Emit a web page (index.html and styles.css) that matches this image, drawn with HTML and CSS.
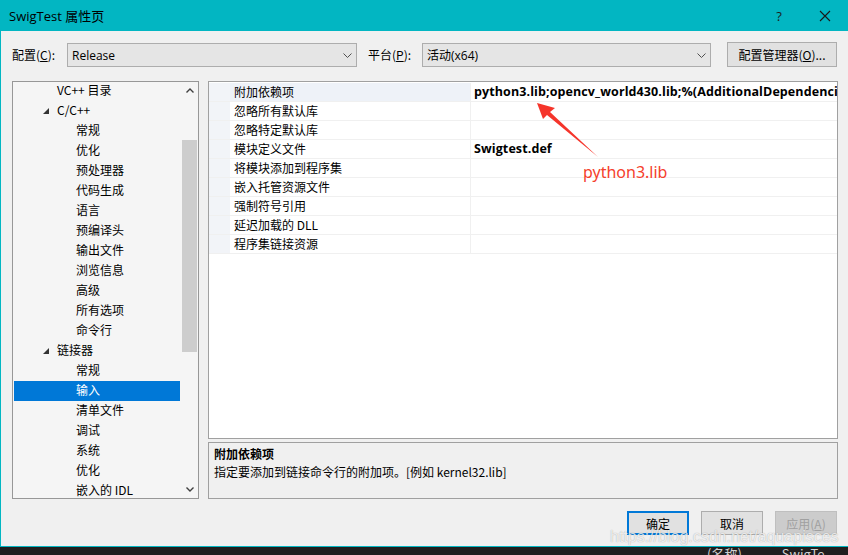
FILE: index.html
```html
<!DOCTYPE html>
<html>
<head>
<meta charset="utf-8">
<link rel="stylesheet" href="styles.css">
</head>
<body>
<div class="screen">
  <div class="titlebar">
    <span class="title">SwigTest 属性页</span>
    <span class="tb-btn tb-help">?</span>
    <span class="tb-btn"><svg width="12" height="12" viewBox="0 0 12 12"><path d="M1 1 L11 11 M11 1 L1 11" stroke="#1a1a1a" stroke-width="1.1" fill="none"/></svg></span>
  </div>
  <div class="dialog">
    <div class="toolbar">
      <span class="lbl">配置(<u>C</u>):</span>
      <div class="combo combo-config"><span>Release</span><svg class="chev" width="9" height="5" viewBox="0 0 9 5"><path d="M0.5 0.5 L4.5 4.5 L8.5 0.5" stroke="#505050" fill="none"/></svg></div>
      <span class="lbl lbl-plat">平台(<u>P</u>):</span>
      <div class="combo combo-plat"><span>活动(x64)</span><svg class="chev" width="9" height="5" viewBox="0 0 9 5"><path d="M0.5 0.5 L4.5 4.5 L8.5 0.5" stroke="#505050" fill="none"/></svg></div>
      <div class="btn btn-mgr">配置管理器(<u>O</u>)...</div>
    </div>
    <div class="main">
      <div class="tree">
        <div class="tree-list">
          <div class="row l1">VC++ 目录</div>
          <div class="row l1x"><svg class="tri" width="6" height="6" viewBox="0 0 6 6"><path d="M6 0 L6 6 L0 6 Z" fill="#333"/></svg>C/C++</div>
          <div class="row l2">常规</div>
          <div class="row l2">优化</div>
          <div class="row l2">预处理器</div>
          <div class="row l2">代码生成</div>
          <div class="row l2">语言</div>
          <div class="row l2">预编译头</div>
          <div class="row l2">输出文件</div>
          <div class="row l2">浏览信息</div>
          <div class="row l2">高级</div>
          <div class="row l2">所有选项</div>
          <div class="row l2">命令行</div>
          <div class="row l1x"><svg class="tri" width="6" height="6" viewBox="0 0 6 6"><path d="M6 0 L6 6 L0 6 Z" fill="#333"/></svg>链接器</div>
          <div class="row l2">常规</div>
          <div class="row l2 sel">输入</div>
          <div class="row l2">清单文件</div>
          <div class="row l2">调试</div>
          <div class="row l2">系统</div>
          <div class="row l2">优化</div>
          <div class="row l2">嵌入的 IDL</div>
        </div>
        <div class="scrollbar">
          <div class="sb-btn"><svg width="8" height="5" viewBox="0 0 8 5"><path d="M0.5 4.5 L4 1 L7.5 4.5" stroke="#404040" stroke-width="1.4" fill="none"/></svg></div>
          <div class="sb-track"><div class="sb-thumb"></div></div>
          <div class="sb-btn"><svg width="8" height="5" viewBox="0 0 8 5"><path d="M0.5 0.5 L4 4 L7.5 0.5" stroke="#404040" stroke-width="1.4" fill="none"/></svg></div>
        </div>
      </div>
      <div class="right">
        <div class="grid">
          <div class="prow first"><div class="gut"></div><div class="pname">附加依赖项</div><div class="pval">python3.lib;opencv_world430.lib;%(AdditionalDependencies)</div></div>
          <div class="prow"><div class="gut"></div><div class="pname">忽略所有默认库</div><div class="pval"></div></div>
          <div class="prow"><div class="gut"></div><div class="pname">忽略特定默认库</div><div class="pval"></div></div>
          <div class="prow"><div class="gut"></div><div class="pname">模块定义文件</div><div class="pval">Swigtest.def</div></div>
          <div class="prow"><div class="gut"></div><div class="pname">将模块添加到程序集</div><div class="pval"></div></div>
          <div class="prow"><div class="gut"></div><div class="pname">嵌入托管资源文件</div><div class="pval"></div></div>
          <div class="prow"><div class="gut"></div><div class="pname">强制符号引用</div><div class="pval"></div></div>
          <div class="prow"><div class="gut"></div><div class="pname">延迟加载的 DLL</div><div class="pval"></div></div>
          <div class="prow"><div class="gut"></div><div class="pname">程序集链接资源</div><div class="pval"></div></div>
        </div>
        <div class="desc">
          <div class="desc-title">附加依赖项</div>
          <div class="desc-text">指定要添加到链接命令行的附加项。[例如 kernel32.lib]</div>
        </div>
      </div>
    </div>
    <div class="footer">
      <div class="btn fbtn default">确定</div>
      <div class="btn fbtn">取消</div>
      <div class="btn fbtn disabled">应用(<u>A</u>)</div>
    </div>
  </div>
  <div class="taskbar">
    <span class="tk-a">(名称)</span>
    <span class="tk-b">SwigTe</span>
  </div>
  <svg class="annot" width="848" height="555" viewBox="0 0 848 555">
    <polygon points="537,103 555,108 550,112 598,157 547,115 543,119" fill="#f5352b"/>
  </svg>
  <div class="annot-text">python3.lib</div>
  <div class="watermark">https://blog.csdn.net/aquapisces</div>
</div>
</body>
</html>
```
FILE: styles.css
```css
html, body {
  margin: 0;
  padding: 0;
}
body {
  width: 848px;
  height: 555px;
  overflow: hidden;
  font-family: "Open Sans", "Noto Sans CJK SC", sans-serif;
  font-size: 12px;
  color: #000;
  background: #1e1e1e;
}
.screen {
  position: relative;
  width: 848px;
  height: 555px;
  overflow: hidden;
}
.titlebar {
  height: 31px;
  background: #02b6c2;
  display: flex;
  align-items: center;
}
.title {
  flex: 1;
  padding-left: 9px;
  font-size: 13px;
  color: #000;
}
.tb-btn {
  width: 46px;
  height: 31px;
  display: flex;
  align-items: center;
  justify-content: center;
  font-size: 13px;
  color: #1a1a1a;
}
.dialog {
  height: 516px;
  box-sizing: border-box;
  background: #f0f0f0;
  border-left: 1px solid #02b6c2;
  border-bottom: 1px solid #02b6c2;
  display: flex;
  flex-direction: column;
}
.toolbar {
  margin-top: 11px;
  height: 25px;
  display: flex;
  align-items: center;
  padding-left: 11px;
}
.lbl {
  width: 55px;
  font-family: "Noto Sans CJK SC", sans-serif;
}
.lbl-plat {
  margin-left: 11px;
  width: 54px;
}
.combo {
  height: 24px;
  box-sizing: border-box;
  border: 1px solid #adadad;
  background: #e5e5e5;
  display: flex;
  align-items: center;
  justify-content: space-between;
  padding: 0 4px 0 4px;
  margin-top: 1px;
}
.combo-config { width: 290px; }
.combo-plat { width: 289px; }
.btn {
  height: 24px;
  box-sizing: border-box;
  border: 1px solid #adadad;
  background: #e1e1e1;
  display: flex;
  align-items: center;
  justify-content: center;
  font-family: "Noto Sans CJK SC", sans-serif;
}
.btn-mgr {
  margin-left: 16px;
  width: 110px;
  height: 25px;
}
.main {
  margin-top: 14px;
  height: 418px;
  display: flex;
  padding-left: 11px;
}
.tree {
  width: 187px;
  height: 418px;
  box-sizing: border-box;
  border: 1px solid #979797;
  background: #f5f5f5;
  display: flex;
}
.tree-list {
  flex: 1;
  padding: 0 1px;
  margin-top: -1px;
  overflow: hidden;
  font-family: "Noto Sans CJK SC", sans-serif;
}
.row {
  height: 20px;
  box-sizing: border-box;
  padding-bottom: 2px;
  line-height: 18px;
  white-space: nowrap;
  display: flex;
  align-items: center;
}
.l1 { padding-left: 43px; }
.l1x { padding-left: 29px; }
.l2 { padding-left: 62px; }
.tri { margin-right: 8px; margin-top: 2px; }
.row.sel {
  background: #0078d7;
  color: #fff;
}
.scrollbar {
  width: 17px;
  display: flex;
  flex-direction: column;
}
.sb-btn {
  height: 17px;
  display: flex;
  align-items: center;
  justify-content: center;
}
.sb-track {
  flex: 1;
  padding: 41px 1px 0 1px;
}
.sb-thumb {
  height: 212px;
  background: #cdcdcd;
}
.right {
  margin-left: 9px;
  width: 630px;
  display: flex;
  flex-direction: column;
}
.grid {
  height: 358px;
  box-sizing: border-box;
  border: 1px solid #a0a0a0;
  background: #fff;
  padding-top: 1px;
  overflow: hidden;
}
.prow {
  height: 19px;
  box-sizing: border-box;
  border-bottom: 1px solid #f0f0f0;
  display: flex;
}
.gut {
  width: 21px;
  background: #f2f4f8;
}
.pname {
  width: 241px;
  box-sizing: border-box;
  padding-left: 4px;
  line-height: 18px;
  border-right: 1px solid #f0f0f0;
  font-family: "Noto Sans CJK SC", sans-serif;
  white-space: nowrap;
}
.prow.first .pname {
  background: #eef2f8;
}
.pval {
  flex: 1;
  padding-left: 3px;
  line-height: 18px;
  font-size: 12.5px;
  letter-spacing: 0.1px;
  font-weight: bold;
  white-space: nowrap;
  overflow: hidden;
}
.desc {
  margin-top: 3px;
  height: 57px;
  box-sizing: border-box;
  border: 1px solid #a0a0a0;
  background: #f0f0f0;
  padding: 2px 5px 0 5px;
  font-family: "Noto Sans CJK SC", sans-serif;
}
.desc-title {
  font-weight: bold;
  line-height: 18px;
}
.desc-text {
  line-height: 18px;
}
.footer {
  margin-top: 12px;
  display: flex;
  justify-content: flex-end;
  gap: 12px;
  padding-right: 11px;
}
.fbtn {
  width: 62px;
  height: 24px;
}
.fbtn.default {
  border: 2px solid #0078d7;
}
.fbtn.disabled {
  background: #cccccc;
  border-color: #bfbfbf;
  color: #a0a0a0;
}
.taskbar {
  height: 8px;
  background: #1f1f1f;
  position: relative;
  overflow: hidden;
  font-family: "Noto Sans CJK SC", sans-serif;
  font-size: 13px;
  color: #d0d0d0;
  line-height: 14px;
  display: flex;
}
.tk-a { margin-left: 707px; }
.tk-b { margin-left: 40px; }
.annot {
  position: absolute;
  left: 0;
  top: 0;
  pointer-events: none;
}
.annot-text {
  position: absolute;
  left: 583px;
  top: 161px;
  font-family: "Noto Sans", sans-serif;
  font-size: 16px;
  line-height: 22px;
  color: #f5402c;
}
.watermark {
  position: absolute;
  left: 610px;
  top: 528px;
  font-family: "Liberation Sans", sans-serif;
  font-size: 16px;
  line-height: 18px;
  color: rgba(255, 255, 255, 0.8);
  text-shadow: 0 0 1px rgba(0, 0, 0, 0.35);
}
```
